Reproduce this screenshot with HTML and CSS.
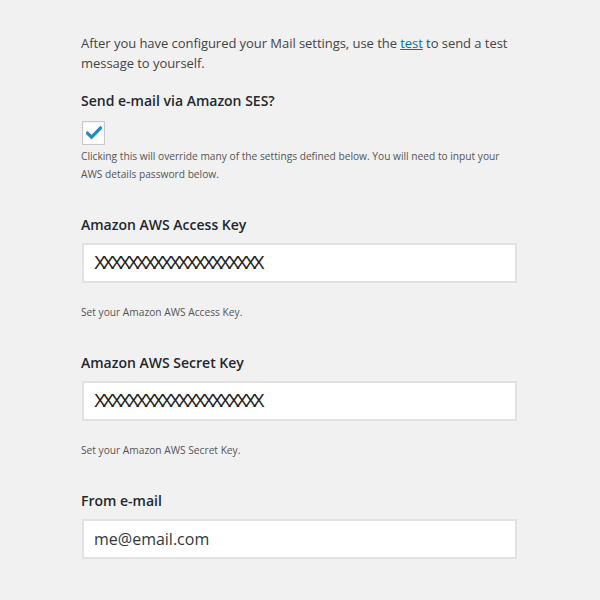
FILE: index.html
```html
<!DOCTYPE html>
<html>
<head>
<meta charset="utf-8">
<link rel="stylesheet" href="styles.css">
</head>
<body>
<div class="wrap">
  <p class="intro">After you have configured your Mail settings, use the <a href="#">test</a> to send a test message to yourself.</p>

  <div class="section first">
    <h3 class="label">Send e-mail via Amazon SES?</h3>
    <span class="checkbox">
      <svg width="16" height="14" viewBox="0 0 16 14"><path d="M1.5 7.2 L5.6 11.2 L14.5 2" fill="none" stroke="#1e8cbe" stroke-width="3.2" stroke-linecap="square"/></svg>
    </span>
    <p class="desc tight">Clicking this will override many of the settings defined below. You will need to input your AWS details password below.</p>
  </div>

  <div class="section">
    <h3 class="label">Amazon AWS Access Key</h3>
    <div class="input"><span class="xs">XXXXXXXXXXXXXXXXXXXX</span></div>
    <p class="desc">Set your Amazon AWS Access Key.</p>
  </div>

  <div class="section">
    <h3 class="label">Amazon AWS Secret Key</h3>
    <div class="input"><span class="xs">XXXXXXXXXXXXXXXXXXXX</span></div>
    <p class="desc">Set your Amazon AWS Secret Key.</p>
  </div>

  <div class="section">
    <h3 class="label">From e-mail</h3>
    <div class="input"><span class="val">me@email.com</span></div>
  </div>
</div>
</body>
</html>
```

FILE: styles.css
```css
html, body {
  margin: 0;
  padding: 0;
  background: #f1f1f1;
}
body {
  font-family: "Open Sans", "Noto Sans", sans-serif;
  color: #444;
}
.wrap {
  padding: 33px 0 0 81px;
  width: 445px;
}
.intro {
  margin: 0;
  font-size: 13px;
  letter-spacing: -0.05px;
  line-height: 20px;
  color: #444;
}
.intro a {
  color: #0073aa;
  text-decoration: underline;
}
.section {
  margin-top: 32px;
}
.section.first {
  margin-top: 18px;
}
.label {
  margin: 0 0 8px 0;
  font-size: 14px;
  line-height: 20px;
  font-weight: 600;
  color: #23282d;
}
.first .label {
  margin-bottom: 10px;
}
.checkbox {
  display: flex;
  align-items: center;
  justify-content: center;
  width: 21px;
  height: 22px;
  margin-left: 1px;
  background: #fff;
  border: 1px solid #c8c8c8;
  box-shadow: inset 0 1px 2px rgba(0,0,0,0.07);
}
.desc {
  margin: 20px 0 0 0;
  font-size: 10.2px;
  line-height: 18px;
  color: #555;
}
.desc.tight {
  margin-top: 2px;
  width: 428px;
}
.input {
  box-sizing: border-box;
  height: 40px;
  width: 435px;
  margin-left: 1px;
  background: #fff;
  border: 2px solid #e2e2e2;
  display: flex;
  align-items: center;
  padding-left: 10px;
}
.xs {
  font-family: "Liberation Sans", Arial, sans-serif;
  font-size: 18px;
  letter-spacing: -3.65px;
  color: #222;
}
.val {
  font-size: 16px;
  color: #32373c;
}
```
